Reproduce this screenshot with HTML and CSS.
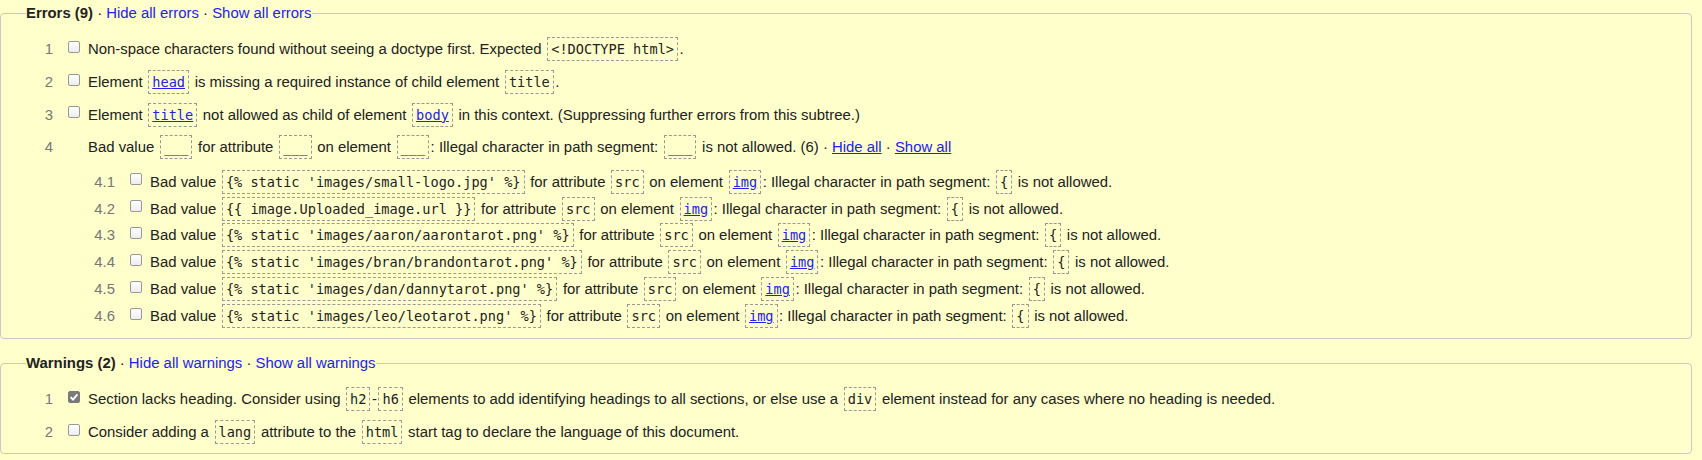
FILE: index.html
```html
<!DOCTYPE html>
<html lang="en">
<head>
<meta charset="utf-8">
<title>Validation results</title>
<link rel="stylesheet" href="styles.css">
</head>
<body>
<fieldset class="group group-errors">
  <legend class="group-title"><strong>Errors (9)</strong> · <a href="#">Hide all errors</a> · <a href="#">Show all errors</a></legend>
  <ol class="msgs">
    <li class="msg"><span class="num">1</span><span class="cb"></span><span class="txt">Non-space characters found without seeing a doctype first. Expected <code>&lt;!DOCTYPE html&gt;</code>.</span></li>
    <li class="msg"><span class="num">2</span><span class="cb"></span><span class="txt">Element <code><a href="#">head</a></code> is missing a required instance of child element <code>title</code>.</span></li>
    <li class="msg"><span class="num">3</span><span class="cb"></span><span class="txt">Element <code><a href="#">title</a></code> not allowed as child of element <code><a href="#">body</a></code> in this context. (Suppressing further errors from this subtree.)</span></li>
    <li class="item">
      <div class="msg"><span class="num">4</span><span class="cb cb-none"></span><span class="txt">Bad value <code>___</code> for attribute <code>___</code> on element <code>___</code>: Illegal character in path segment: <code>___</code> is not allowed. (6) · <a class="ul" href="#">Hide all</a> · <a class="ul" href="#">Show all</a></span></div>
      <ol class="sub">
        <li class="msg msg-sub"><span class="num">4.1</span><span class="cb"></span><span class="txt">Bad value <code>{% static 'images/small-logo.jpg' %}</code> for attribute <code>src</code> on element <code><a href="#">img</a></code>: Illegal character in path segment: <code>{</code> is not allowed.</span></li>
        <li class="msg msg-sub"><span class="num">4.2</span><span class="cb"></span><span class="txt">Bad value <code>{{ image.Uploaded_image.url }}</code> for attribute <code>src</code> on element <code><a href="#">img</a></code>: Illegal character in path segment: <code>{</code> is not allowed.</span></li>
        <li class="msg msg-sub"><span class="num">4.3</span><span class="cb"></span><span class="txt">Bad value <code>{% static 'images/aaron/aarontarot.png' %}</code> for attribute <code>src</code> on element <code><a href="#">img</a></code>: Illegal character in path segment: <code>{</code> is not allowed.</span></li>
        <li class="msg msg-sub"><span class="num">4.4</span><span class="cb"></span><span class="txt">Bad value <code>{% static 'images/bran/brandontarot.png' %}</code> for attribute <code>src</code> on element <code><a href="#">img</a></code>: Illegal character in path segment: <code>{</code> is not allowed.</span></li>
        <li class="msg msg-sub"><span class="num">4.5</span><span class="cb"></span><span class="txt">Bad value <code>{% static 'images/dan/dannytarot.png' %}</code> for attribute <code>src</code> on element <code><a href="#">img</a></code>: Illegal character in path segment: <code>{</code> is not allowed.</span></li>
        <li class="msg msg-sub"><span class="num">4.6</span><span class="cb"></span><span class="txt">Bad value <code>{% static 'images/leo/leotarot.png' %}</code> for attribute <code>src</code> on element <code><a href="#">img</a></code>: Illegal character in path segment: <code>{</code> is not allowed.</span></li>
      </ol>
    </li>
  </ol>
</fieldset>
<fieldset class="group group-warnings">
  <legend class="group-title"><strong>Warnings (2)</strong> · <a href="#">Hide all warnings</a> · <a href="#">Show all warnings</a></legend>
  <ol class="msgs">
    <li class="msg"><span class="num">1</span><span class="cb cb-checked"><svg viewBox="0 0 12 12" width="12" height="12"><polyline points="2.6,6.2 5,8.6 9.4,3.4" fill="none" stroke="#fff" stroke-width="1.8"/></svg></span><span class="txt">Section lacks heading. Consider using <code>h2</code>-<code>h6</code> elements to add identifying headings to all sections, or else use a <code>div</code> element instead for any cases where no heading is needed.</span></li>
    <li class="msg"><span class="num">2</span><span class="cb"></span><span class="txt">Consider adding a <code>lang</code> attribute to the <code>html</code> start tag to declare the language of this document.</span></li>
  </ol>
</fieldset>
</body>
</html>
```

FILE: styles.css
```css
html {
  background: #ffffcc;
}

body {
  margin: 0;
  font-family: "Liberation Sans", Arial, sans-serif;
  font-size: 14.9px;
  color: #222;
}

a {
  color: #2222ee;
  text-decoration: none;
}

a.ul,
code a {
  text-decoration: underline;
}

.group {
  margin: 5px 10px 0 0;
  padding: 0 0 8px 0;
  border: 1px solid #c9c9c9;
  border-radius: 4px;
  min-width: 0;
}

.group-warnings {
  margin-top: 16px;
  padding-bottom: 4px;
}

.group-title {
  margin-left: 25px;
  padding: 0;
  line-height: 17px;
  white-space: nowrap;
}

.group-title strong {
  font-weight: bold;
  color: #222;
}

.msgs {
  list-style: none;
  margin: 0;
  padding: 11.5px 0 0 0;
}

.group-warnings .msgs {
  padding-top: 11px;
}

.msgs .msg {
  height: 32.7px;
}

.group-warnings .msgs .msg {
  height: 33px;
}

.msg {
  display: flex;
  align-items: center;
  white-space: nowrap;
  line-height: 17px;
}

.sub {
  list-style: none;
  margin: 4.5px 0 0 0;
  padding: 0 0 0 62px;
}

.sub .msg-sub {
  height: 26.9px;
}

.num {
  width: 52px;
  flex: none;
  text-align: right;
  color: #777;
}

.cb {
  flex: none;
  width: 12px;
  height: 12px;
  box-sizing: border-box;
  margin: 0 8px 6px 15px;
  border: 1px solid #999;
  border-radius: 2px;
  background: linear-gradient(#ffffff, #ededed);
  display: flex;
}

.cb-none {
  border-color: transparent;
  background: none;
}

.cb-checked {
  background: #7a7a7a;
  border-color: #7a7a7a;
}

.cb-checked svg {
  display: block;
  margin: -1px;
}

.txt {
  flex: none;
}

code {
  font-family: "DejaVu Sans Mono", monospace;
  font-size: 13.6px;
  border: 1px dashed #999;
  padding: 3px 3px;
  margin: 0 1.5px;
  color: #222;
}
```
